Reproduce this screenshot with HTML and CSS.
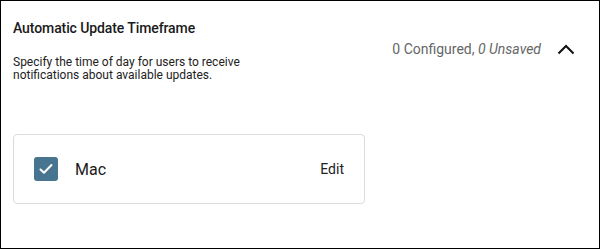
FILE: index.html
```html
<!DOCTYPE html>
<html lang="en">
<head>
<meta charset="UTF-8">
<title>Automatic Update Timeframe</title>
<link rel="stylesheet" href="styles.css">
</head>
<body>

<div class="panel">
    <div class="panel-header">
        <div class="panel-text">
            <h2 class="panel-title">Automatic Update Timeframe</h2>
            <p class="panel-desc">Specify the time of day for users to receive<br>notifications about available updates.</p>
        </div>
        <div class="panel-status">
            <span class="status-text">0 Configured, <em>0 Unsaved</em></span>
            <svg class="chevron" width="18" height="12" viewBox="0 0 18 12">
                <path d="M1.5 10.5 L9 3 L16.5 10.5" fill="none" stroke="#111" stroke-width="2"/>
            </svg>
        </div>
    </div>

    <div class="platform-card">
        <span class="checkbox">
            <svg width="14" height="12" viewBox="0 0 14 12">
                <path d="M1.5 6.5 L5 9.8 L12.5 2" fill="none" stroke="#fff" stroke-width="2" stroke-linecap="round" stroke-linejoin="round"/>
            </svg>
        </span>
        <span class="platform-name">Mac</span>
        <a class="edit-link" href="#">Edit</a>
    </div>
</div>

</body>
</html>
```

FILE: styles.css
```css
body {
    margin: 0;
    padding: 0;
    font-family: Roboto, "Liberation Sans", Arial, sans-serif;
    color: #1a1a1a;
    background: #fff;
}
.panel {
    width: 598px;
    height: 247px;
    border: 1px solid #000;
    box-sizing: content-box;
}
.panel-header {
    display: flex;
    justify-content: space-between;
    padding: 18px 0 0 12px;
}
.panel-title {
    margin: 0;
    font-size: 14px;
    font-weight: 500;
    line-height: 18px;
    letter-spacing: -0.1px;
}
.panel-desc {
    margin: 19px 0 0;
    font-size: 12px;
    line-height: 13px;
    color: #222;
}
.panel-status {
    display: flex;
    align-items: center;
    margin-top: 20px;
    padding-right: 24px;
    height: 20px;
}
.status-text {
    font-size: 14px;
    color: #666;
}
.status-text em {
    font-style: italic;
}
.chevron {
    margin-left: 16px;
}
.platform-card {
    display: flex;
    align-items: center;
    width: 350px;
    height: 68px;
    margin: 52px 0 0 12px;
    border: 1px solid #dcdcdc;
    border-radius: 4px;
}
.checkbox {
    display: flex;
    align-items: center;
    justify-content: center;
    width: 24px;
    height: 24px;
    margin-left: 20px;
    border-radius: 3px;
    background: #47758f;
}
.platform-name {
    margin-left: 17px;
    font-size: 16px;
    flex: 1;
}
.edit-link {
    margin-right: 20px;
    font-size: 14px;
    color: #222;
    text-decoration: none;
}
```
